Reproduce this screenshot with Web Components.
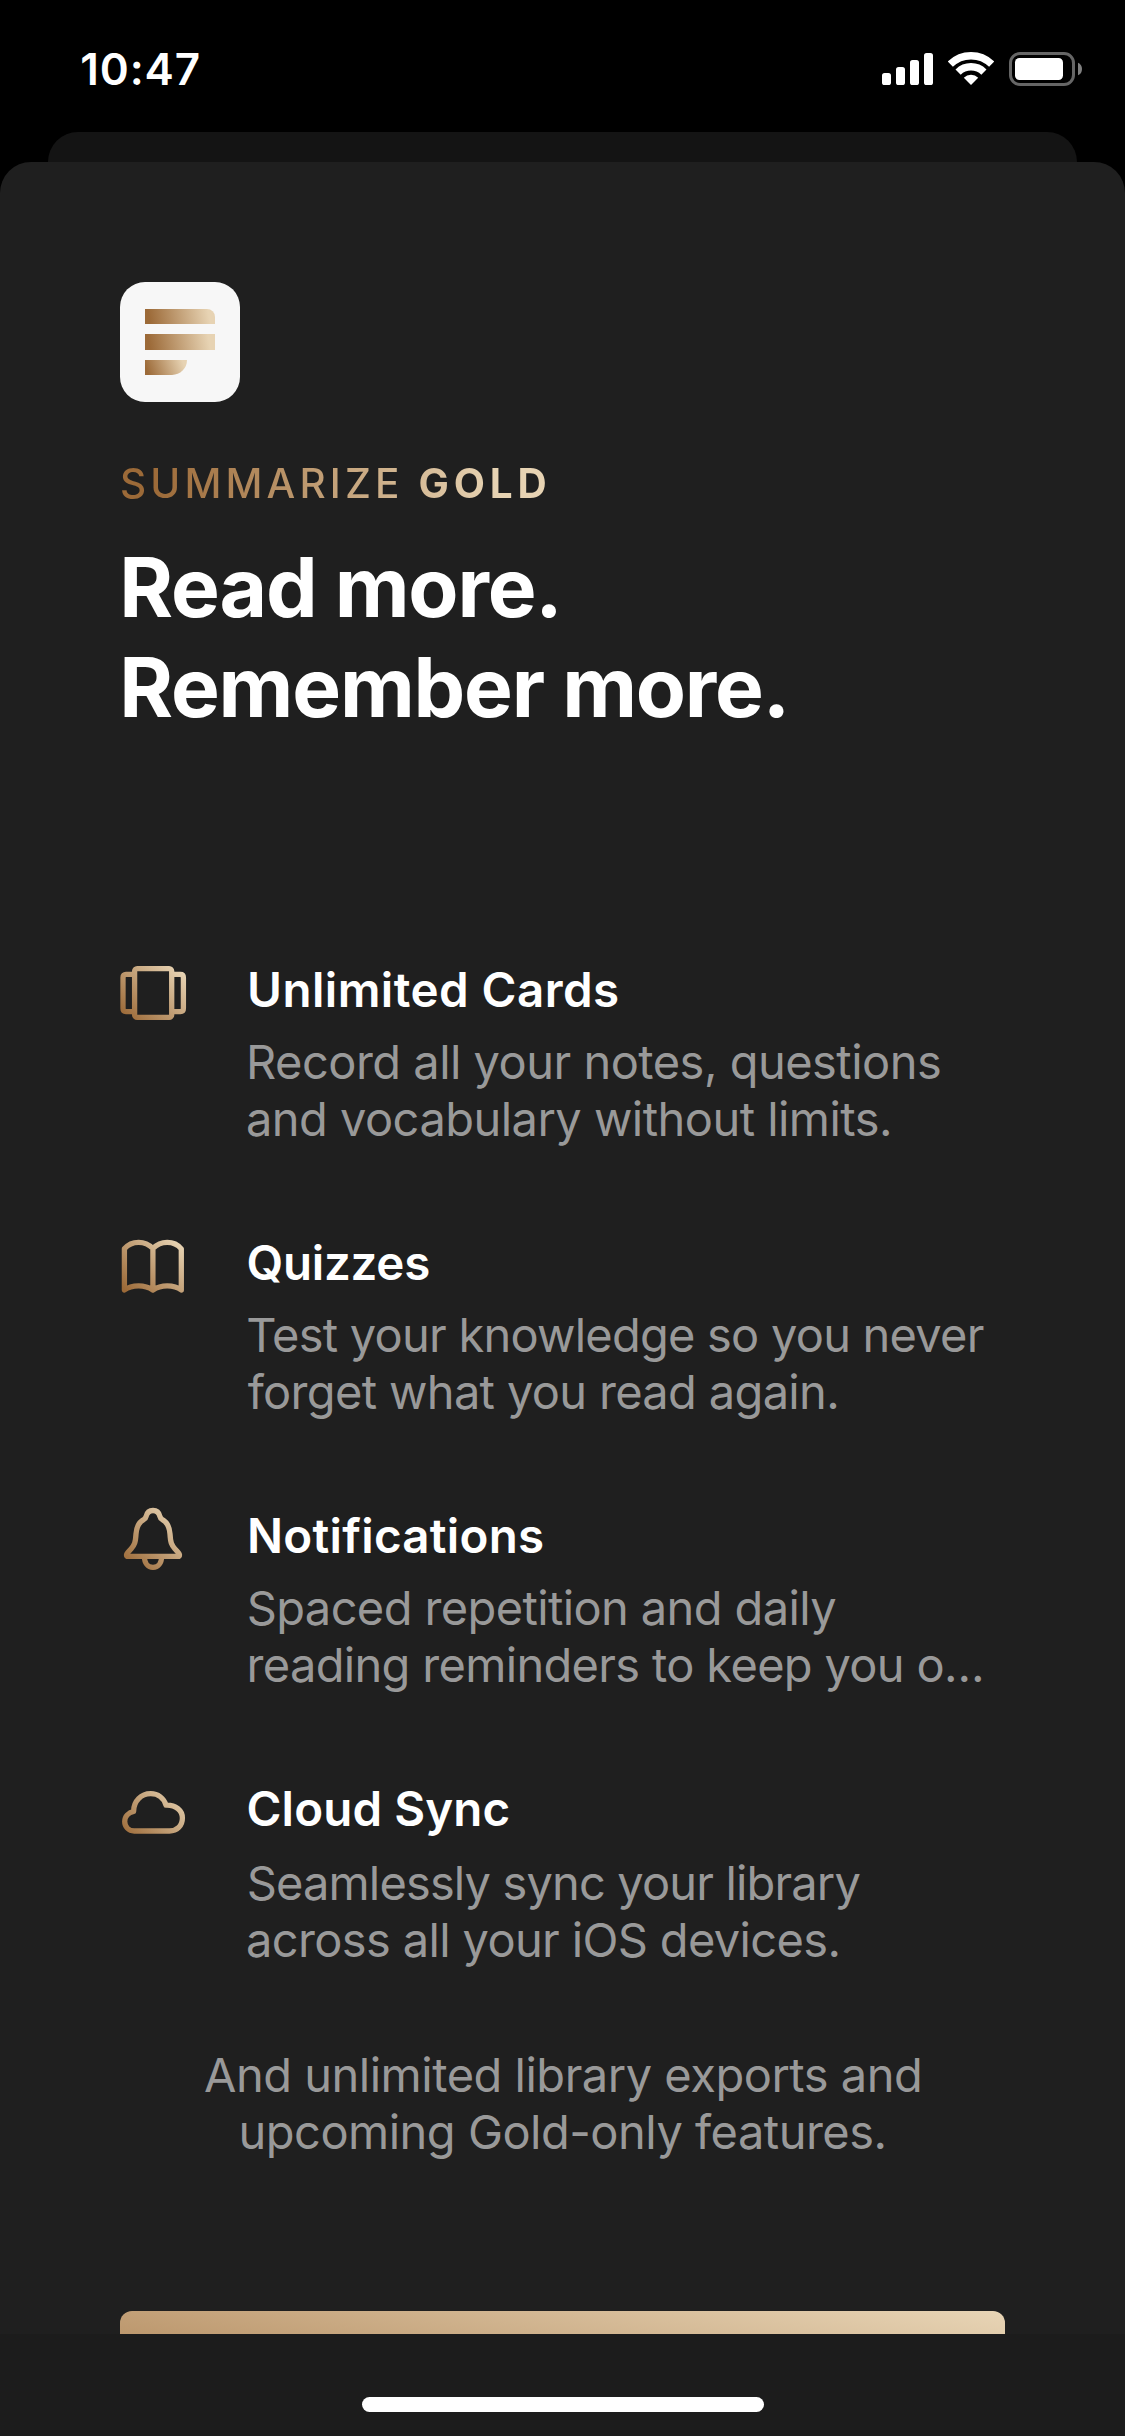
<!DOCTYPE html>
<html lang="en">
<head>
<meta charset="utf-8">
<title>Summarize Gold</title>
<style>
  html, body { margin: 0; background: #000; }
  body { width: 1125px; height: 2436px; overflow: hidden; font-family: Inter, "Liberation Sans", sans-serif; color: #fff; }
</style>
</head>
<body>
<gold-screen></gold-screen>
<script>
const define = (name, html, init) => {
  const template = document.createElement('template');
  template.innerHTML = html;
  customElements.define(name, class extends HTMLElement {
    constructor() {
      super();
      this.attachShadow({ mode: 'open' }).append(template.content.cloneNode(true));
    }
    connectedCallback() { if (init) init(this, this.shadowRoot); }
  });
};

/* A single line of text tracked so that its ink spans `ink` pixels, starting `lead` pixels in. */
const ctx = document.createElement('canvas').getContext('2d');
define('fit-line', `
  <style>
    :host { display: block; white-space: nowrap; flex: none; }
  </style><slot></slot>`, el => {
  const text = el.textContent;
  const cs = getComputedStyle(el);
  const lead = +el.getAttribute('lead') || 0, ink = +el.getAttribute('ink');
  ctx.font = `${cs.fontWeight} ${cs.fontSize} ${cs.fontFamily}`;
  const m = ctx.measureText(text);
  const natural = m.actualBoundingBoxLeft + m.actualBoundingBoxRight;
  el.style.letterSpacing = ((ink - natural) / (text.length - 1)).toFixed(3) + 'px';
  el.style.textIndent = (lead + m.actualBoundingBoxLeft).toFixed(2) + 'px';
  el.style.width = (lead + ink) + 'px';
});

define('status-bar', `
  <style>
    :host { display: flex; justify-content: space-between; align-items: flex-start; height: 132px; padding: 0 43px 0 80px; box-sizing: border-box; }
    fit-line { font-size: 44px; font-weight: 600; line-height: 54px; margin-top: 42px; }
    .icons { display: flex; gap: 15px; margin-top: 52px; }
    svg { display: block; }
  </style>
  <fit-line lead="2.3" ink="116.5">10:47</fit-line>
  <div class="icons">
    <svg width="51" height="34" fill="#fff"><rect y="21" width="9" height="12" rx="2.6"/><rect x="14" y="15" width="9" height="18" rx="2.6"/><rect x="28" y="8" width="9" height="25" rx="2.6"/><rect x="42" y="1" width="9" height="32" rx="2.6"/></svg>
    <svg width="46" height="34" fill="none" stroke="#fff" stroke-width="7.4"><path d="M2.3 12.2A29.5 29.5 0 0 1 43.7 12.2M10.1 20.1A18.4 18.4 0 0 1 35.9 20.1"/><path d="M23 33L15.8 25.7A10.3 10.3 0 0 1 30.2 25.7Z" fill="#fff" stroke="none"/></svg>
    <svg width="73" height="34"><rect x="1.5" y="1.5" width="63" height="31" rx="9.5" fill="none" stroke="#666" stroke-width="3"/><rect x="6" y="6" width="48" height="22" rx="4.5" fill="#fff"/><path d="M69 10.7C71.6 11.7 73 14 73 17S71.6 22.3 69 23.3Z" fill="#808080"/></svg>
  </div>`);

define('app-logo', `
  <style>
    :host { display: flex; flex-direction: column; gap: 10px; box-sizing: border-box; width: 120px; height: 120px; padding: 27px 25px; border-radius: 25px; background: #f7f7f7; }
    i { display: block; width: 70px; height: 15.3px; background: linear-gradient(80deg, #9c6a38 7%, #e7d3b3 90%); }
    .a { border-top-right-radius: 8px; }
    .c { width: 42px; border-bottom-right-radius: 15px; background: linear-gradient(70deg, #9c6a38 7%, #e7d3b3 90%); }
  </style><i class="a"></i><i></i><i class="c"></i>`);

const ICONS = {
  cards: ['0 1 66 66', '<rect x="14.6" y="8.6" width="37.1" height="48.8" rx="2.6"/><path d="M12.6 14.4H6Q3 14.4 3 17.4V48.6Q3 51.6 6 51.6H12.6M53.7 14.4H60.4Q63.4 14.4 63.4 17.4V48.6Q63.4 51.6 60.4 51.6H53.7"/>'],
  book: ['0 1 66 66', '<path d="M4.4 15.8C8 11.5 13 9.3 18.6 9.3S29 11.5 32.9 15.5C36.8 11.5 41.6 9.3 47.2 9.3S57.8 11.5 61.3 15.8V57C57.5 54 52.8 52.8 47.2 52.8S37 54.2 32.9 57C28.8 54.2 24.2 52.8 18.6 52.8S8.2 54 4.4 57ZM32.9 15.5V56.5"/>'],
  bell: ['0 1 66 66', '<path d="M33 4.5C28.9 4.5 26.8 7.3 26 10.6C25.7 12 25.2 12.6 24 13.3C18.6 16.2 16.4 22 16 28C15.5 36.5 14.6 38.8 11 43C8.6 45.7 6.5 47.4 6.5 48.9Q6.5 50.4 8.2 50.4H57.8Q59.5 50.4 59.5 48.9C59.5 47.4 57.4 45.7 55 43C51.4 38.8 50.5 36.5 50 28C49.6 22 47.4 16.2 42 13.3C40.8 12.6 40.3 12 40 10.6C39.2 7.3 37.1 4.5 33 4.5ZM24.4 50.4C24.4 57 28 61.3 33 61.3S41.6 57 41.6 50.4"/>'],
  cloud: ['0 0 66 66', '<path d="M14.2 51C8.6 51 4.7 46.8 4.7 41.6C4.7 36.4 8.5 32.6 13.6 31.4C13.6 21 21.3 13.7 30.7 13.7C38 13.7 43.8 18 46 25.2C55.8 24.8 62.4 30.6 62.4 38C62.4 45.8 57 51 49.4 51Z"/>']
};
define('gold-icon', `
  <style>:host { display: block; width: 66px; height: 66px; flex: none; } svg { display: block; overflow: visible; }</style>
  <svg width="66" height="66" fill="none" stroke="url(#g)" stroke-width="5.3" stroke-linejoin="round">
    <defs><linearGradient id="g" gradientUnits="userSpaceOnUse" x1="8" y1="60" x2="58" y2="8"><stop stop-color="#9c6a38"/><stop offset="1" stop-color="#e7d3b3"/></linearGradient></defs>
    <g></g>
  </svg>`, (el, root) => {
  const [box, shape] = ICONS[el.getAttribute('name')];
  root.querySelector('svg').setAttribute('viewBox', box);
  root.querySelector('g').innerHTML = shape;
});

define('feature-row', `
  <style>
    :host { display: flex; align-items: flex-start; gap: 61px; }
    .title { font-size: 47.5px; font-weight: 600; line-height: 57px; }
    .text { font-size: 47px; line-height: 57px; color: #999; margin-top: var(--text-gap, 15px); }
  </style>
  <slot name="icon"></slot>
  <div><div class="title"><slot name="title"></slot></div><div class="text"><slot></slot></div></div>`);

define('home-bar', `
  <style>
    :host { display: flex; justify-content: center; align-items: flex-start; height: 102px; padding-top: 63px; box-sizing: border-box; background: #1c1c1c; }
    i { width: 402px; height: 15px; border-radius: 7.5px; background: #fff; }
  </style><i></i>`);

define('gold-screen', `
  <style>
    :host { display: flex; flex-direction: column; width: 1125px; height: 2436px; background: #000; }
    .back { flex: none; height: 60px; margin: 0 48px -30px; border-radius: 30px 30px 0 0; background: #141414; }
    main { position: relative; flex: 1; min-height: 0; overflow: hidden; display: flex; flex-direction: column; padding: 120px 120px 0; border-radius: 31px 31px 0 0; background: #1f1f1f; }
    main > * { flex: none; }
    .brand { display: flex; width: 430px; margin-top: 58px; font-size: 40.5px; line-height: 48px; font-weight: 500; color: transparent; background: linear-gradient(85deg, #9c6a38 8%, #e7d3b3 87%); -webkit-background-clip: text; background-clip: text; }
    .brand .b { font-weight: 700; }
    h1 { margin: 30px 0 0; font-size: 82px; line-height: 100px; font-weight: 700; }
    .features { display: flex; flex-direction: column; gap: 87px; margin-top: 223px; }
    .more { display: flex; flex-direction: column; align-items: center; margin-top: 78px; font-size: 47px; line-height: 57px; color: #999; }
    .buy { height: 165px; margin-top: 151px; border-radius: 12px; background: linear-gradient(to top right, #9c6a38, #e8d5b6); }
  </style>
  <status-bar></status-bar>
  <div class="back"></div>
  <main>
    <app-logo></app-logo>
    <div class="brand"><fit-line lead="2" ink="275">SUMMARIZE</fit-line><fit-line class="b" lead="22.5" ink="126">GOLD</fit-line></div>
    <h1><fit-line lead="4.3" ink="432">Read more.</fit-line><fit-line lead="4.3" ink="659.4">Remember more.</fit-line></h1>
    <section class="features">
      <feature-row>
        <gold-icon slot="icon" name="cards"></gold-icon>
        <fit-line slot="title" lead="3" ink="368">Unlimited Cards</fit-line>
        <fit-line lead="3" ink="690">Record all your notes, questions</fit-line>
        <fit-line lead="1" ink="641">and vocabulary without limits.</fit-line>
      </feature-row>
      <feature-row>
        <gold-icon slot="icon" name="book"></gold-icon>
        <fit-line slot="title" lead="1.5" ink="180.7">Quizzes</fit-line>
        <fit-line lead="1.2" ink="735.5">Test your knowledge so you never</fit-line>
        <fit-line lead=".7" ink="588.5">forget what you read again.</fit-line>
      </feature-row>
      <feature-row>
        <gold-icon slot="icon" name="bell"></gold-icon>
        <fit-line slot="title" lead="3" ink="293">Notifications</fit-line>
        <fit-line lead="1.7" ink="587.5">Spaced repetition and daily</fit-line>
        <fit-line lead="2.5" ink="731.5">reading reminders to keep you o…</fit-line>
      </feature-row>
      <feature-row style="--text-gap:17px">
        <gold-icon slot="icon" name="cloud"></gold-icon>
        <fit-line slot="title" lead="1.5" ink="260">Cloud Sync</fit-line>
        <fit-line lead="1.7" ink="611.7">Seamlessly sync your library</fit-line>
        <fit-line lead="1" ink="589.5">across all your iOS devices.</fit-line>
      </feature-row>
    </section>
    <div class="more"><fit-line ink="715">And unlimited library exports and</fit-line><fit-line ink="642">upcoming Gold-only features.</fit-line></div>
    <div class="buy"></div>
  </main>
  <home-bar></home-bar>`);
</script>
</body>
</html>
